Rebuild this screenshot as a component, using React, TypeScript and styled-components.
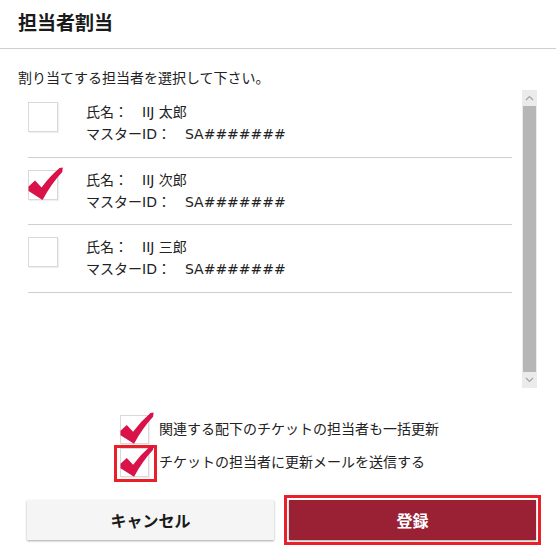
import styled, { createGlobalStyle } from 'styled-components';

const GlobalStyle = createGlobalStyle`
  html, body {
    margin: 0;
    padding: 0;
    background: #fff;
  }
  body {
    font-family: "Noto Sans CJK JP", "Noto Sans", sans-serif;
    color: #222;
  }
`;

const Dialog = styled.div`
  width: 556px;
  height: 560px;
  display: flex;
  flex-direction: column;
  overflow: hidden;
`;

const Header = styled.header`
  height: 48px;
  padding: 0 18px;
  border-bottom: 1px solid #cfcfcf;
  h1 {
    margin: 0;
    font-size: 19px;
    line-height: 44px;
    font-weight: 700;
    color: #1a1a1a;
  }
`;

const Lead = styled.p`
  margin: 18px 0 3px 18px;
  font-size: 14px;
  line-height: 20px;
  color: #222;
`;

const ListFrame = styled.div`
  margin-left: 28px;
  width: 509px;
  height: 298px;
  display: flex;
  gap: 10px;
`;

const ListInner = styled.ul`
  flex: 1;
  list-style: none;
  margin: 0;
  padding: 0;
  overflow: hidden;
`;

const Scrollbar = styled.div`
  flex: none;
  width: 15px;
  display: flex;
  flex-direction: column;
  background: #ebebeb;
`;

const ScrollArrow = styled.span`
  flex: none;
  height: 16px;
  display: flex;
  align-items: center;
  justify-content: center;
  svg {
    width: 9px;
    height: 6px;
  }
`;

const Thumb = styled.span`
  flex: 1;
  margin: 0 1px;
  background: #b6b6b6;
`;

const Row = styled.li`
  box-sizing: border-box;
  height: 67.5px;
  border-bottom: 1px solid #cfcfcf;
  display: flex;
  align-items: flex-start;
  padding-top: 11px;
`;

const BoxSlot = styled.span<{ $size: number }>`
  position: relative;
  flex: none;
  width: ${(p) => p.$size}px;
  height: ${(p) => p.$size}px;
`;

const Box = styled.span`
  display: block;
  box-sizing: border-box;
  width: 100%;
  height: 100%;
  background: #fff;
  border: 1px solid #d9d9d9;
  box-shadow: 1px 1px 1px rgba(0, 0, 0, 0.06);
`;

const Mark = styled.svg`
  position: absolute;
  left: -1px;
  top: -4px;
  width: 127%;
  height: 120%;
  overflow: visible;
`;

const RowCheck = styled(BoxSlot)`
  margin-top: 1px;
`;

const Info = styled.div`
  margin-left: 28px;
  font-family: "DejaVu Sans", "Noto Sans CJK JP", sans-serif;
  font-size: 14px;
  line-height: 22px;
  color: #222;
`;

const Line = styled.div`
  display: flex;
  white-space: nowrap;
`;

const Value = styled.span`
  margin-left: 14px;
`;

const Options = styled.div`
  align-self: center;
  margin-top: 27px;
  display: flex;
  flex-direction: column;
  gap: 2px;
`;

const Option = styled.label`
  display: flex;
  align-items: flex-start;
  font-size: 14px;
  line-height: 26px;
  color: #222;
  white-space: nowrap;
`;

const OptionSlot = styled.span<{ $highlight?: boolean }>`
  flex: none;
  width: 37px;
  height: 31px;
  box-sizing: border-box;
  padding: 0 5px 2px 3px;
  margin-right: 5px;
  outline: ${(p) => (p.$highlight ? '3px solid #e8202a' : 'none')};
`;

const Buttons = styled.div`
  margin-top: 21px;
  padding: 0 20px 0 27px;
  display: grid;
  grid-template-columns: 1fr 1fr;
  gap: 15px;
`;

const Button = styled.button<{ $primary?: boolean; $highlight?: boolean }>`
  height: 40px;
  border: none;
  border-radius: 0;
  font-family: inherit;
  font-size: 16px;
  font-weight: 700;
  cursor: pointer;
  background: ${(p) => (p.$primary ? '#9a2034' : '#f5f5f5')};
  color: ${(p) => (p.$primary ? '#fff' : '#1a1a1a')};
  box-shadow: 0 1px 2px rgba(0, 0, 0, 0.35);
  outline: ${(p) => (p.$highlight ? '3px solid #e8202a' : 'none')};
  outline-offset: 2px;
`;

function Check({ checked }: { checked: boolean }) {
  return (
    <>
      <Box />
      {checked && (
        <Mark viewBox="0 0 38 36">
          <path
            d="M1.5 20.5 L8 14.5 L14.5 21.5 Q22 11 32.5 2 L35.8 1.5 L35.2 6 Q24 18 15.5 34 L1.5 25 Z"
            fill="#d9134a"
          />
        </Mark>
      )}
    </>
  );
}

const staff = [
  { name: 'IIJ 太郎', id: 'SA#######', checked: false },
  { name: 'IIJ 次郎', id: 'SA#######', checked: true },
  { name: 'IIJ 三郎', id: 'SA#######', checked: false },
];

export default function App() {
  return (
    <>
      <GlobalStyle />
      <Dialog>
        <Header>
          <h1>担当者割当</h1>
        </Header>
        <Lead>割り当てする担当者を選択して下さい。</Lead>
        <ListFrame>
          <ListInner>
            {staff.map((s) => (
              <Row key={s.name}>
                <RowCheck $size={30}>
                  <Check checked={s.checked} />
                </RowCheck>
                <Info>
                  <Line>
                    <span>氏名：</span>
                    <Value>{s.name}</Value>
                  </Line>
                  <Line>
                    <span>マスターID：</span>
                    <Value>{s.id}</Value>
                  </Line>
                </Info>
              </Row>
            ))}
          </ListInner>
          <Scrollbar>
            <ScrollArrow>
              <svg viewBox="0 0 9 6">
                <path d="M1 5 L4.5 1.5 L8 5" fill="none" stroke="#a3a3a3" strokeWidth="1.2" />
              </svg>
            </ScrollArrow>
            <Thumb />
            <ScrollArrow>
              <svg viewBox="0 0 9 6">
                <path d="M1 1 L4.5 4.5 L8 1" fill="none" stroke="#a3a3a3" strokeWidth="1.2" />
              </svg>
            </ScrollArrow>
          </Scrollbar>
        </ListFrame>
        <Options>
          <Option>
            <OptionSlot>
              <BoxSlot $size={29}>
                <Check checked />
              </BoxSlot>
            </OptionSlot>
            関連する配下のチケットの担当者も一括更新
          </Option>
          <Option>
            <OptionSlot $highlight>
              <BoxSlot $size={29}>
                <Check checked />
              </BoxSlot>
            </OptionSlot>
            チケットの担当者に更新メールを送信する
          </Option>
        </Options>
        <Buttons>
          <Button>キャンセル</Button>
          <Button $primary $highlight>
            登録
          </Button>
        </Buttons>
      </Dialog>
    </>
  );
}
